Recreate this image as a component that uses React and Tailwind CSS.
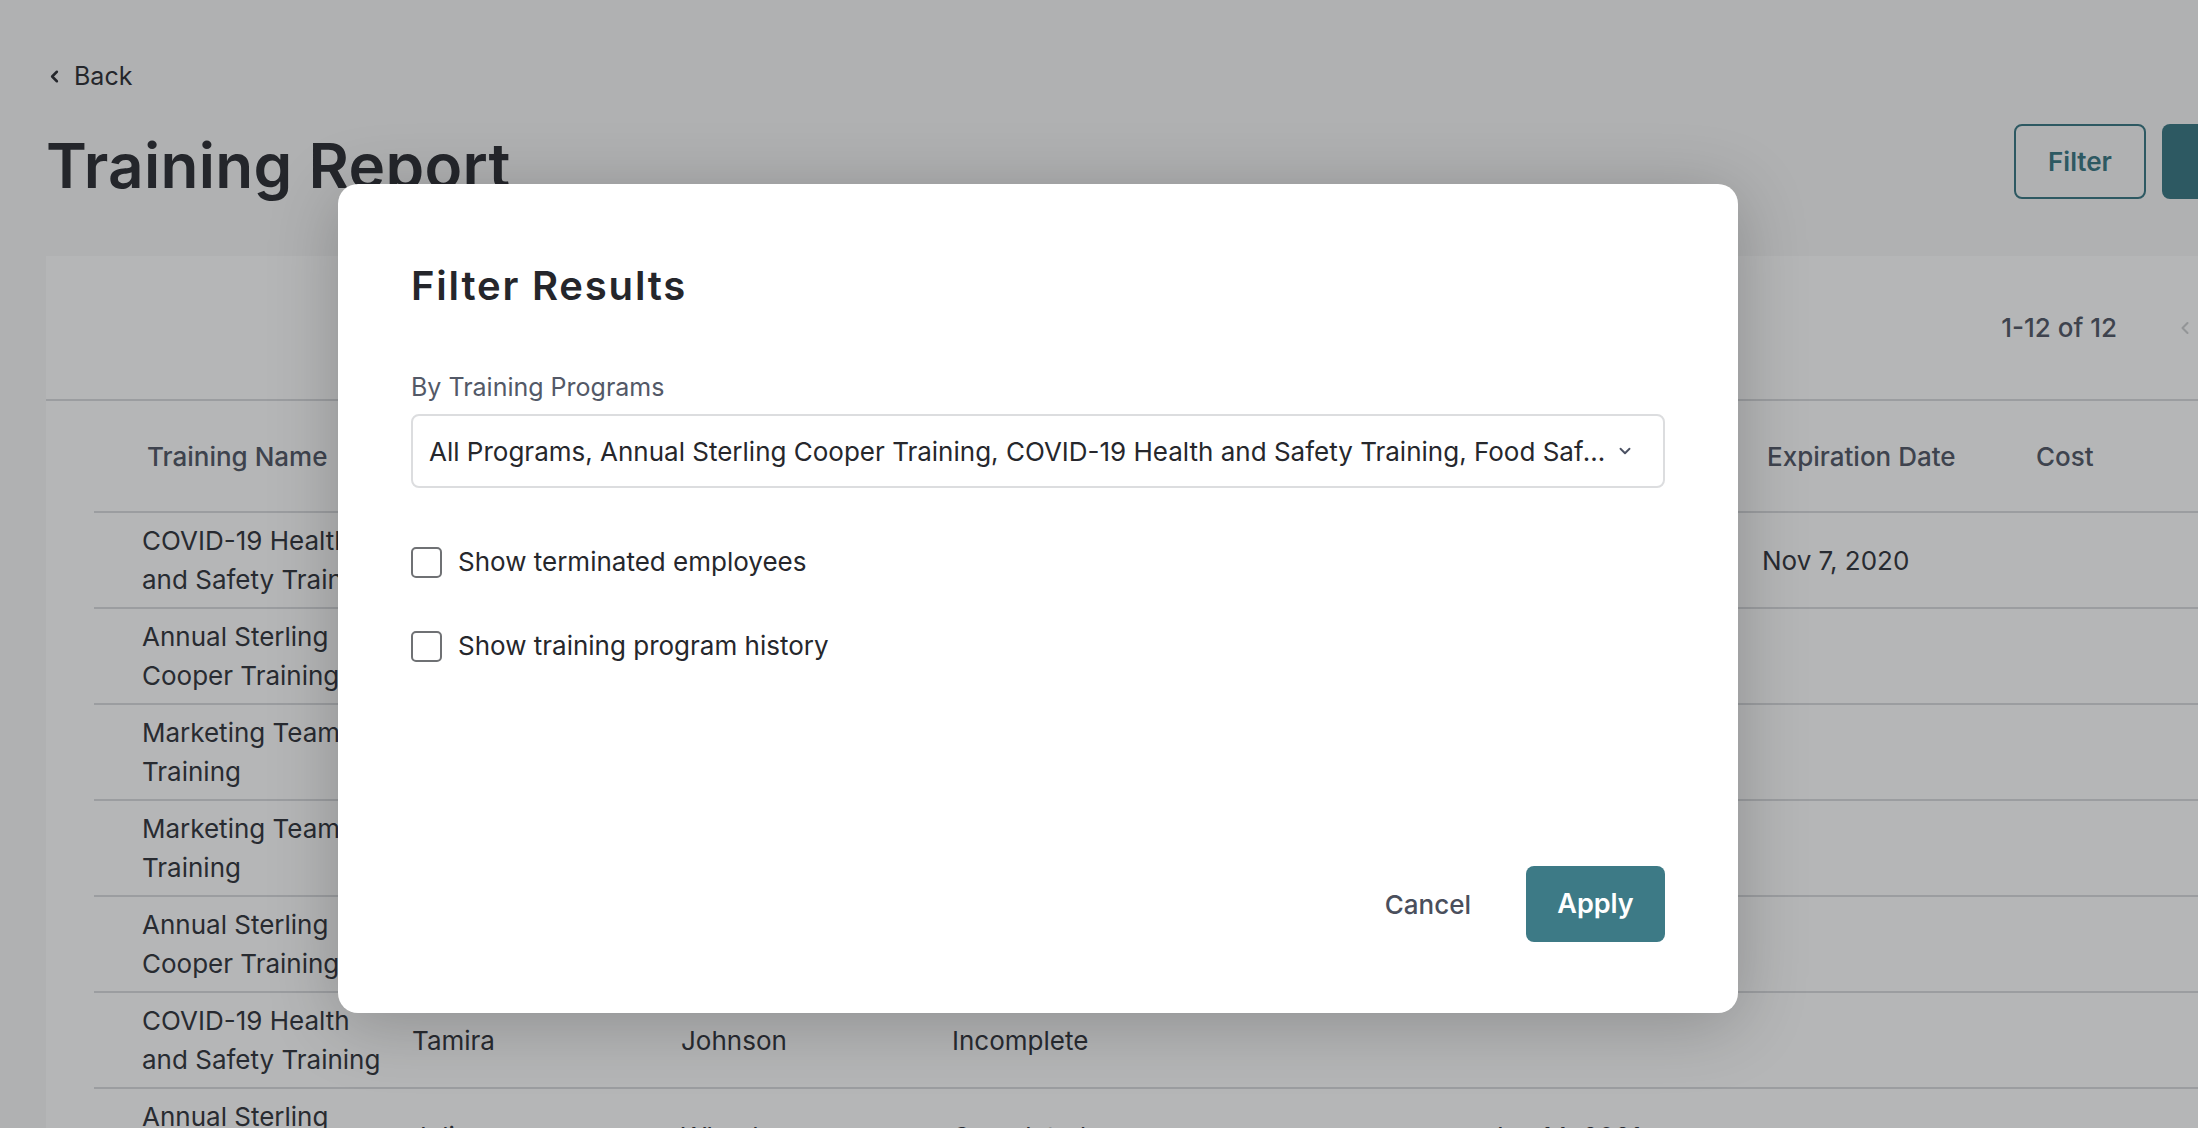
import React from "react";
import { ChevronLeft, ChevronRight, ChevronDown } from "lucide-react";

const rows = [
  { name: ["COVID-19 Health", "and Safety Training"], first: "Peggy", last: "Olson", status: "Completed", done: "Nov 7, 2019", expires: "Nov 7, 2020", cost: "" },
  { name: ["Annual Sterling", "Cooper Training"], first: "Peggy", last: "Olson", status: "Incomplete", done: "", expires: "", cost: "" },
  { name: ["Marketing Team", "Training"], first: "Don", last: "Draper", status: "Incomplete", done: "", expires: "", cost: "" },
  { name: ["Marketing Team", "Training"], first: "Joan", last: "Holloway", status: "Incomplete", done: "", expires: "", cost: "" },
  { name: ["Annual Sterling", "Cooper Training"], first: "Roger", last: "Sterling", status: "Incomplete", done: "", expires: "", cost: "" },
  { name: ["COVID-19 Health", "and Safety Training"], first: "Tamira", last: "Johnson", status: "Incomplete", done: "", expires: "", cost: "" },
  { name: ["Annual Sterling", "Cooper Training"], first: "Julie", last: "Wheeler", status: "Completed", done: "Jan 14, 2021", expires: "", cost: "" },
];

const cols = "grid grid-cols-[270px_269px_271px_537px_273px_269px_1fr]";

function Checkbox({ label }) {
  return (
    <label className="flex items-center gap-[16px]">
      <span className="block h-[31px] w-[31px] rounded-[5px] border-2 border-[#6f7174] bg-white" />
      <span className="text-[26px] leading-[32px] text-[#26272c]">{label}</span>
    </label>
  );
}

export default function App() {
  return (
    <div className="relative h-[1128px] w-full overflow-hidden bg-[#f8f8f8] font-['Inter','Liberation_Sans',sans-serif]">
      {/* report page */}
      <div className="w-[2368px] px-[46px] pt-[60px]">
        <div className="flex h-[32px] items-center gap-[10px] text-[#303237]">
          <ChevronLeft size={19} strokeWidth={3.2} className="-ml-[1px]" />
          <span className="text-[25px] leading-none">Back</span>
        </div>

        <div className="mt-[32px] flex h-[75px] items-center justify-between">
          <h1 className="pt-[8px] text-[62px] font-semibold leading-none tracking-[0.005em] text-[#303237]">
            Training Report
          </h1>
          <div className="flex gap-[16px]">
            <button className="h-[75px] w-[132px] rounded-[8px] border-2 border-[#3d7a86] text-[26px] font-semibold text-[#3d7a86]">
              Filter
            </button>
            <button className="h-[75px] w-[160px] rounded-[8px] bg-[#3d7a86] text-[26px] font-semibold text-white">
              Export
            </button>
          </div>
        </div>

        <div className="mt-[57px] bg-white">
          <div className="flex h-[145px] items-center justify-end border-b-2 border-[#dadbde] pr-[71px]">
            <span className="text-[26px] font-medium text-[#555b69]">1-12 of 12</span>
            <ChevronLeft size={20} strokeWidth={2.5} className="ml-[58px] text-[#cfd0d2]" />
            <ChevronRight size={20} strokeWidth={2.5} className="ml-[36px] text-[#555b69]" />
          </div>

          <div className="px-[48px]">
            <div className={`${cols} h-[112px] items-center border-b-2 border-[#dadbde] pl-[53px] text-[26px] font-medium text-[#555b69]`}>
              <span>Training Name</span>
              <span>First Name</span>
              <span>Last Name</span>
              <span>Status</span>
              <span>Completion Date</span>
              <span>Expiration Date</span>
              <span>Cost</span>
            </div>
            {rows.map((r, i) => (
              <div
                key={i}
                className={`${cols} h-[96px] items-center border-b-2 border-[#dadbde] pl-[48px] text-[26px] leading-[39px] text-[#36393f]`}
              >
                <span>
                  {r.name[0]}
                  <br />
                  {r.name[1]}
                </span>
                <span>{r.first}</span>
                <span>{r.last}</span>
                <span>{r.status}</span>
                <span>{r.done}</span>
                <span>{r.expires}</span>
                <span>{r.cost}</span>
              </div>
            ))}
          </div>
        </div>
      </div>

      {/* dimming layer */}
      <div className="absolute inset-0 bg-[rgba(10,12,18,0.3)]" />

      {/* filter dialog */}
      <div className="absolute left-[338px] top-[184px] flex h-[829px] w-[1400px] flex-col rounded-[20px] bg-white px-[73px] pb-[71px] pt-[78px] shadow-[0_10px_70px_rgba(0,0,0,0.22)]">
        <h2 className="text-[40px] font-semibold leading-[48px] tracking-[0.045em] text-[#25262b]">Filter Results</h2>

        <div className="mt-[61px] text-[25px] leading-[32px] text-[#535967]">By Training Programs</div>
        <div className="mt-[11px] flex h-[74px] items-center rounded-[8px] border-2 border-[#dcdddf] pl-[16px] pr-[29px]">
          <span className="min-w-0 flex-1 truncate text-[26px] text-[#26272c]">
            All Programs, Annual Sterling Cooper Training, COVID-19 Health and Safety Training, Food Safety Training, Marketing Team Training
          </span>
          <ChevronDown size={18} strokeWidth={2.5} className="ml-[8px] shrink-0 text-[#4b5163]" />
        </div>

        <div className="mt-[58px]">
          <Checkbox label="Show terminated employees" />
        </div>
        <div className="mt-[52px]">
          <Checkbox label="Show training program history" />
        </div>

        <div className="mt-auto flex items-center justify-end">
          <button className="text-[26px] font-medium text-[#4a4f5c]">Cancel</button>
          <button className="ml-[55px] h-[76px] w-[139px] rounded-[8px] bg-[#3d7a86] text-[27px] font-semibold text-white">
            Apply
          </button>
        </div>
      </div>
    </div>
  );
}
